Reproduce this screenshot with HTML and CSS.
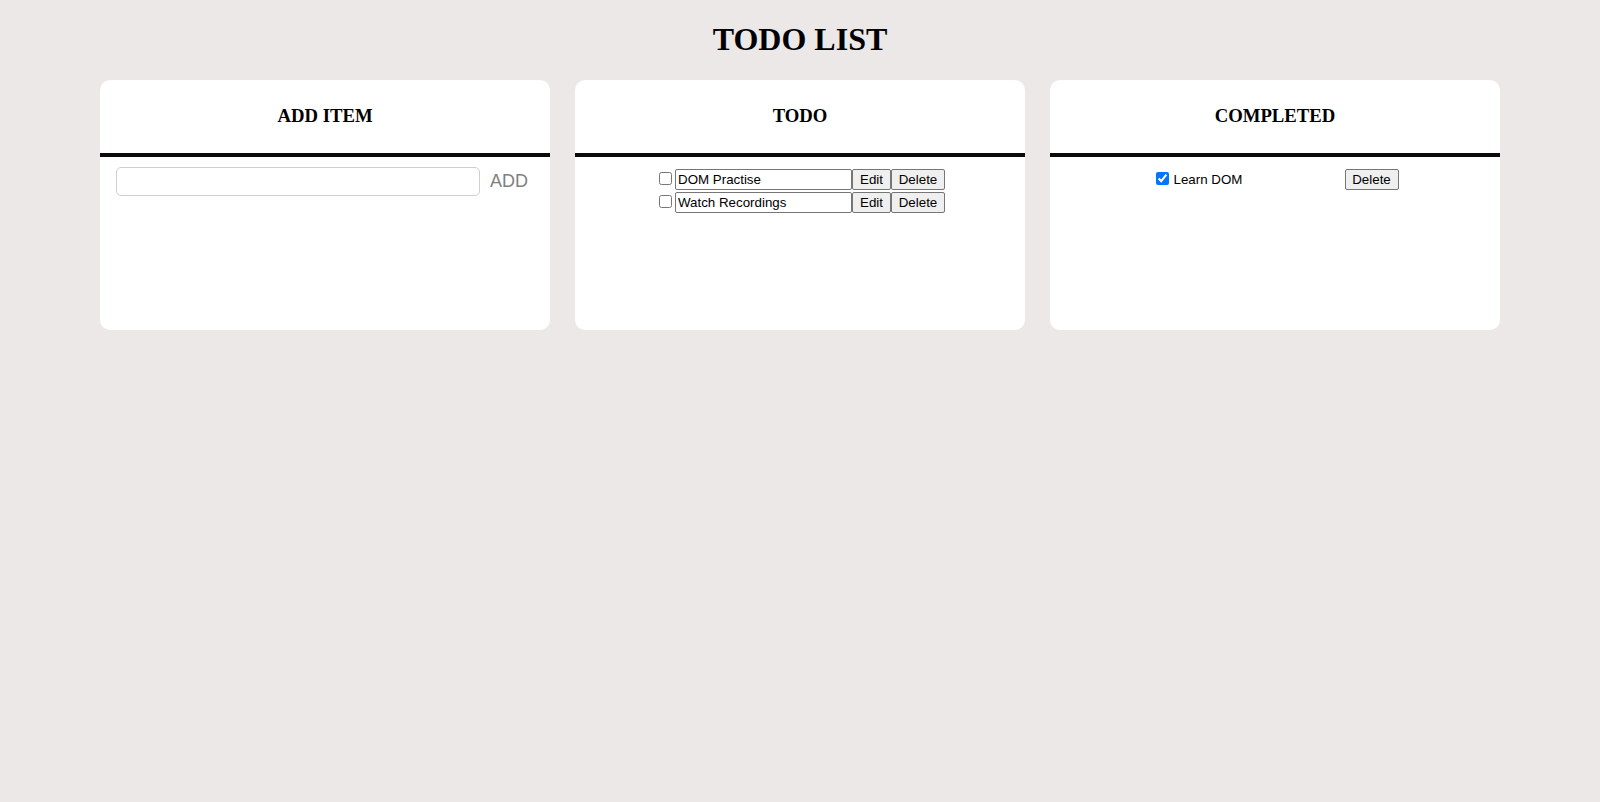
FILE: index.html
```html
<!DOCTYPE html>
<html>
<head>
<meta charset="utf-8">
<title>Todo List</title>
<link rel="stylesheet" href="styles.css">
</head>
<body>
<h1 class="title">TODO LIST</h1>
<div class="board">
  <section class="card">
    <h3 class="card-head">ADD ITEM</h3>
    <div class="card-body add-body">
      <input class="new-task" type="text">
      <button class="add-btn">ADD</button>
    </div>
  </section>
  <section class="card">
    <h3 class="card-head">TODO</h3>
    <div class="card-body">
      <ul class="list">
        <li class="row"><input type="checkbox" class="chk"><input type="text" class="task" value="DOM Practise"><button class="btn">Edit</button><button class="btn">Delete</button></li>
        <li class="row"><input type="checkbox" class="chk"><input type="text" class="task" value="Watch Recordings"><button class="btn">Edit</button><button class="btn">Delete</button></li>
      </ul>
    </div>
  </section>
  <section class="card">
    <h3 class="card-head">COMPLETED</h3>
    <div class="card-body">
      <ul class="list">
        <li class="row"><input type="checkbox" class="chk" checked><input type="text" class="task done" value="Learn DOM" readonly><button class="btn">Delete</button></li>
      </ul>
    </div>
  </section>
</div>
</body>
</html>
```
FILE: styles.css
```css
html, body {
  margin: 0;
  padding: 0;
}
body {
  background: #ece8e7;
  font-family: "Liberation Serif", "Times New Roman", serif;
  color: #000;
}
.title {
  margin: 0;
  padding-top: 21px;
  height: 80px;
  box-sizing: border-box;
  font-size: 32px;
  font-weight: bold;
  text-align: center;
  line-height: 37px;
}
.board {
  display: flex;
  gap: 25px;
  padding: 0 100px;
}
.card {
  width: 450px;
  height: 250px;
  background: #fff;
  border-radius: 10px;
  display: flex;
  flex-direction: column;
}
.card-head {
  margin: 0;
  height: 72px;
  display: flex;
  align-items: center;
  justify-content: center;
  font-size: 18.72px;
  font-weight: bold;
  border-bottom: 4px solid #0d0a0a;
  padding-bottom: 1px;
  box-sizing: content-box;
}
.card-body {
  padding-top: 12px;
}
.add-body {
  padding: 10px 16px 0;
  display: flex;
  align-items: center;
  gap: 10px;
}
.new-task {
  width: 364px;
  height: 29px;
  box-sizing: border-box;
  border: 1px solid #cfcfcf;
  border-radius: 5px;
  margin: 0;
  padding: 0 6px;
  font-family: "Liberation Sans", Arial, sans-serif;
  font-size: 16px;
  outline: none;
}
.add-btn {
  background: none;
  border: none;
  padding: 0;
  margin: 0 0 1px 0;
  color: #808080;
  font-family: "Liberation Sans", Arial, sans-serif;
  font-size: 18px;
  cursor: pointer;
}
.list {
  list-style: none;
  margin: 0;
  padding: 0;
  display: flex;
  flex-direction: column;
  align-items: center;
  gap: 2px;
}
.row {
  display: flex;
  align-items: flex-start;
  height: 21px;
}
.chk {
  width: 13px;
  height: 13px;
  margin: 3px 3px 3px 4px;
}
.task {
  width: 177px;
  height: 21px;
  box-sizing: border-box;
  margin: 0;
  padding: 1px 2px;
  border: 1px solid #767676;
  border-radius: 2px;
  font-family: "Liberation Sans", Arial, sans-serif;
  font-size: 13.333px;
  color: #000;
  background: #fff;
}
.task.done {
  width: 173px;
  border: none;
  outline: none;
}
.btn {
  height: 21px;
  box-sizing: border-box;
  margin: 0;
  padding: 1px 6px;
  border: 1px solid #767676;
  border-radius: 2px;
  background: #efefef;
  font-family: "Liberation Sans", Arial, sans-serif;
  font-size: 13.333px;
  color: #000;
  line-height: 17px;
}
.btn:first-of-type {
  min-width: 39px;
}
.btn:last-of-type {
  min-width: 54px;
}
```
